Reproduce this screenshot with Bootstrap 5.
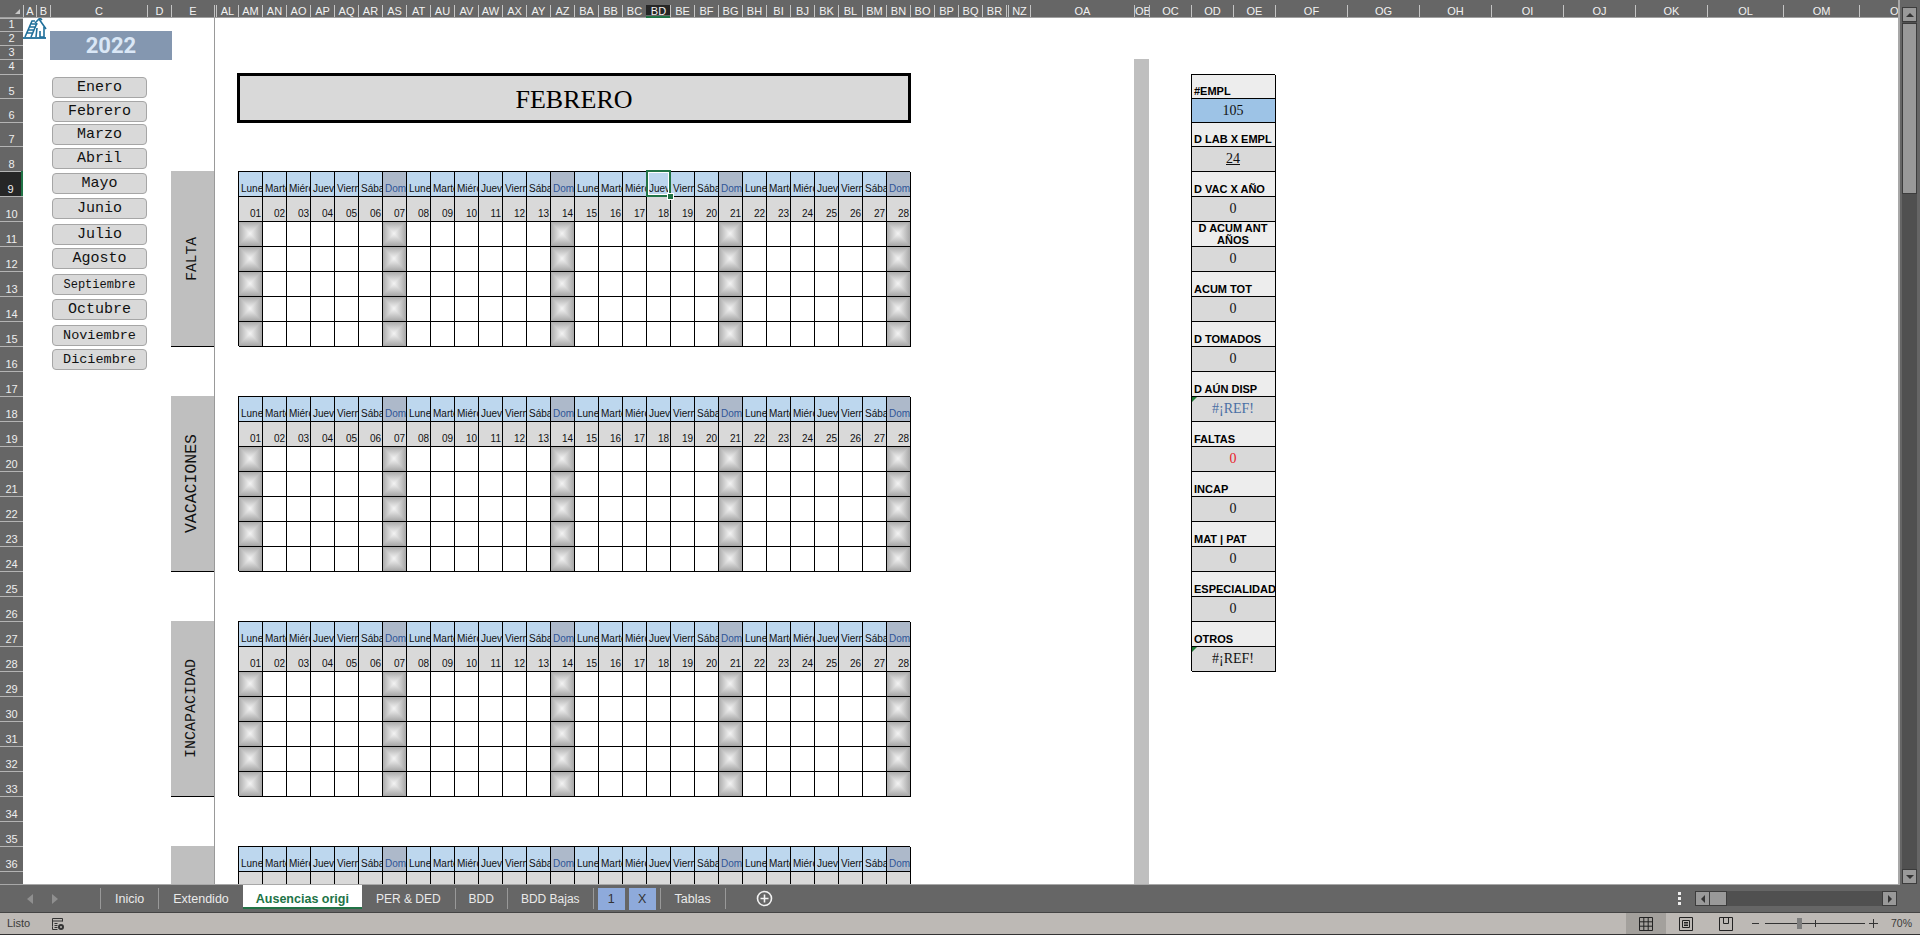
<!DOCTYPE html>
<html lang="es">
  <head>
    <meta charset="UTF-8" />
    <meta name="viewport" content="width=device-width, initial-scale=1.0" />
    <title>Ausencias</title>
    <link
      rel="stylesheet"
      href="https://cdn.jsdelivr.net/npm/bootstrap@5.3.0/dist/css/bootstrap.min.css"
    />
    <script src="https://cdn.jsdelivr.net/npm/bootstrap@5.3.0/dist/js/bootstrap.bundle.min.js"></script>
    <style>
      html, body { height: 100%; overflow: hidden; }
      body {
        background-color: #666;
        font-family: "Liberation Sans", Arial, sans-serif;
        font-size: 11px;
      }
      .hoja-zona { height: 885px; }
      .hoja {
        width: 1900px;
        height: 885px;
        background: #fff;
        overflow: hidden;
        border-right: 2px solid #a8a8a8;
        border-bottom: 1px solid #a8a8a8;
        align-content: start;
      }
      .esquina { background: #666; border-bottom: 1px solid #a0a0a0; }
      .esquina svg { margin: 9px 0 0 15px; display: block; }
      .col-cab {
        background: #666;
        color: #f2f2f2;
        font-size: 11px;
        padding-top: 5px;
        border-bottom: 1px solid #a0a0a0;
        overflow: hidden;
      }
      .col-cab > div {
        height: 12px;
        line-height: 13px;
        border-left: 1px solid #c4c4c4;
        text-align: center;
        white-space: nowrap;
      }
      .col-cab.activa > div { background: #262626; border-left-color: #262626; height: 10px; line-height: 12px; overflow: hidden; }
      .col-cab.activa { border-bottom-color: #217346; border-bottom-width: 2px; }
      .col-cab.ultima > div { text-align: left; padding-left: 30px; }
      .fila-cab {
        background: #666;
        color: #eee;
        font-size: 11px;
        line-height: 12px;
        padding-bottom: 1px;
        box-shadow: inset 0 1px 0 #b4b4b4;
      }
      .fila-cab.activa { background: #262626; border-right: 2px solid #217346; }
      .anio {
        background: #8497b0;
        color: #dae7f6;
        font-family: Roboto, "Liberation Sans", sans-serif;
        font-size: 22px;
        font-weight: 700;
        margin: 0 -1px -1px 0;
      }
      .mes-btn {
        --bs-btn-padding-y: 0;
        --bs-btn-padding-x: 0;
        --bs-btn-bg: #d9d9d9;
        --bs-btn-hover-bg: #d9d9d9;
        --bs-btn-border-color: #a6a6a6;
        --bs-btn-border-radius: 4px;
        --bs-btn-border-width: 1.5px;
        --bs-btn-font-family: "Liberation Mono", "DejaVu Sans Mono", monospace;
        --bs-btn-font-size: 15px;
        --bs-btn-line-height: 18px;
        --bs-btn-color: #111;
        width: 95px;
        height: 21px;
        margin-left: 2px;
        padding-top: 1px;
      }
      .mes-btn.chico { --bs-btn-font-size: 12px; }
      .mes-btn.medio { --bs-btn-font-size: 13.5px; }
      .bloque-lado {
        background: #bfbfbf;
        border-bottom: 1px solid #000;
        height: calc(100% + 1px);
        color: #111;
      }
      .bloque-lado span {
        writing-mode: vertical-rl;
        transform: rotate(180deg);
        font-family: "Liberation Mono", monospace;
        white-space: nowrap;
      }
      .linea-hoja { border-left: 1px solid #999; }
      .barra-gris { background: #bfbfbf; }
      .titulo-mes {
        background: #d9d9d9;
        border: 3px solid #000;
        margin: -1px;
        padding-top: 2px;
        font-family: "Liberation Serif", "Times New Roman", serif;
        font-size: 26px;
        color: #000;
      }
      .dia, .num, .vacia, .finde, .panel-et, .panel-val {
        box-shadow: inset 1px 1px 0 #000, 1px 1px 0 #000;
      }
      .dia {
        background: #bdd7ee;
        color: #111;
        font-size: 10px;
        line-height: 12px;
        padding: 0 0 1px 3px;
        overflow: hidden;
        white-space: nowrap;
        position: relative;
      }
      .dia.dom { background: #adb9ca; color: #2f5597; }
      .dia.sel { overflow: visible; z-index: 3; }
      .dia.sel b { font-weight: 400; display: block; width: 21px; overflow: hidden; }
      .sel-marco {
        position: absolute;
        inset: -1px -1px -1px 0;
        border: 2px solid #217346;
        box-shadow: inset 0 0 0 1px #fff;
      }
      .sel-punto {
        position: absolute;
        right: -3px;
        bottom: -3px;
        width: 5px;
        height: 5px;
        background: #217346;
        outline: 1px solid #fff;
      }
      .num {
        background: #d9d9d9;
        color: #111;
        font-size: 10px;
        line-height: 12px;
        padding: 0 1px 1px 0;
      }
      .vacia { background: #fff; }
      .finde {
        background:
          linear-gradient(90deg, #a6a6a6, #f4f4f4 50%, #a6a6a6),
          linear-gradient(#a6a6a6, #f4f4f4 50%, #a6a6a6);
        background-blend-mode: darken;
      }
      .panel-et {
        background: #ededed;
        color: #000;
        font-size: 11px;
        font-weight: 700;
        line-height: 12px;
        padding: 0 0 1px 3px;
        overflow: hidden;
        white-space: nowrap;
      }
      .panel-et.doble { white-space: normal; padding: 1px 0 0; }
      .panel-val {
        background: #d9d9d9;
        color: #111;
        font-family: "Liberation Serif", "Times New Roman", serif;
        font-size: 14px;
        position: relative;
      }
      .panel-val.azul { background: #9dc3e6; }
      .panel-val.subr { text-decoration: underline; }
      .panel-val.ref-azul { color: #4a6fa5; }
      .panel-val.rojo { color: #e8202a; }
      .panel-val.nota::before {
        content: "";
        position: absolute;
        top: 1px;
        left: 1px;
        border-top: 5px solid #1e7b34;
        border-right: 5px solid transparent;
      }
      .scroll-v { width: 20px; padding: 7px 3px 1px 2px; }
      .scroll-pista { background: #505050; }
      .scroll-boton, .scroll-guia {
        background: #999;
        border: 1px solid #3c3c3c;
      }
      .scroll-v .scroll-boton { height: 15px; }
      .scroll-v .scroll-guia { height: 171px; margin-top: 1px; }
      .flecha { width: 0; height: 0; border: 4px solid transparent; }
      .flecha.arriba { border-top: 0; border-bottom-color: #333; }
      .flecha.abajo { border-bottom: 0; border-top-color: #333; }
      .flecha.izq { border-left: 0; border-right-color: #333; }
      .flecha.der { border-right: 0; border-left-color: #333; }
      .tabs-barra { height: 27px; }
      .tabs-nav { width: 100px; padding-left: 27px; gap: 19px; }
      .tabs-nav .flecha.izq { border-right-color: #8f8f8f; border-width: 5px 6px 5px 0; border-left: 0; }
      .tabs-nav .flecha.der { border-left-color: #8f8f8f; border-width: 5px 0 5px 6px; border-right: 0; }
      .tabs-lista { height: 27px; }
      .pestania {
        --bs-nav-link-color: #eaeaea;
        --bs-nav-link-hover-color: #eaeaea;
        --bs-nav-link-padding-x: 14px;
        --bs-nav-link-padding-y: 0;
        --bs-nav-link-font-size: 12.5px;
        height: 21px;
        margin-top: 3px;
        line-height: 23px;
        border-left: 1px solid #999;
        white-space: nowrap;
      }
      .pestania.mayus { --bs-nav-link-font-size: 12px; }
      .pestania.justa { --bs-nav-link-padding-x: 13px; }
      .pestania.activa {
        --bs-nav-link-padding-x: 13px;
        background: #fff;
        color: #217346;
        font-weight: 700;
        height: 24px;
        margin-top: 0;
        line-height: 28px;
        border: 0;
        border-bottom: 2px solid #217346;
      }
      .pestania.sin-linea { border-left: 0; }
      .pestania.caja {
        background: #8eaadb;
        color: #333;
        border: 0;
        height: 22px;
        padding: 0;
        width: 27px;
        text-align: center;
        margin-right: 4px;
        line-height: 23px;
      }
      .fin-linea { width: 1px; height: 21px; margin-top: 3px; background: #999; }
      .tab-mas { margin: 5px 0 0 30px; }
      .puntos { gap: 2px; margin-right: 14px; }
      .puntos i { width: 3px; height: 3px; background: #eee; display: block; }
      .scroll-h { width: 202px; height: 15px; margin-right: 23px; }
      .scroll-h .scroll-boton { width: 15px; }
      .scroll-h .scroll-guia { width: 17px; border-left: 0; }
      .estado {
        height: 23px;
        background: #bdb9b5;
        border-top: 1px solid #444;
        border-bottom: 1px solid #333;
        color: #3a3a3a;
        font-size: 11px;
      }
      .listo { margin-left: 7px; }
      .macro { margin-left: 21px; }
      .estado-vista { width: 40px; height: 21px; }
      .estado-vista.activa { background: #a3a09c; }
      .zoom-menos { margin-left: 6px; }
      .zoom-linea { width: 100px; height: 1px; background: #333; position: relative; margin: 0 4px 0 6px; }
      .zoom-linea::before { content: ""; position: absolute; left: 50px; top: -3px; width: 1px; height: 7px; background: #333; }
      .zoom-guia { position: absolute; left: 32px; top: -5px; width: 5px; height: 11px; background: #7d7d7d; }
      .zoom-texto { width: 42px; padding-right: 8px; text-align: right; font-size: 10.5px; }
    </style>
  </head>
  <body class="d-flex flex-column">
    <div class="hoja-zona d-flex">
      <div class="hoja d-grid" id="hoja"></div>
      <div class="scroll-v">
        <div class="scroll-pista h-100 d-flex flex-column">
          <div class="scroll-boton d-flex align-items-center justify-content-center"><div class="flecha arriba"></div></div>
          <div class="scroll-guia"></div>
          <div class="flex-grow-1"></div>
          <div class="scroll-boton d-flex align-items-center justify-content-center"><div class="flecha abajo"></div></div>
        </div>
      </div>
    </div>

    <div class="tabs-barra d-flex">
      <div class="tabs-nav d-flex align-items-center">
        <div class="flecha izq"></div>
        <div class="flecha der"></div>
      </div>
      <div class="tabs-lista nav flex-nowrap">
        <a class="nav-link pestania" href="#">Inicio</a>
        <a class="nav-link pestania" href="#">Extendido</a>
        <a class="nav-link pestania activa" href="#">Ausencias origi</a>
        <a class="nav-link pestania mayus sin-linea" href="#">PER &amp; DED</a>
        <a class="nav-link pestania mayus justa" href="#">BDD</a>
        <a class="nav-link pestania mayus justa" href="#">BDD Bajas</a>
        <div class="fin-linea me-1"></div>
        <a class="nav-link pestania caja" href="#">1</a>
        <a class="nav-link pestania caja" href="#">X</a>
        <a class="nav-link pestania" href="#">Tablas</a>
        <div class="fin-linea"></div>
        <svg class="tab-mas" width="17" height="17" viewBox="0 0 17 17" fill="none" stroke="#f2f2f2" stroke-width="1.6">
          <circle cx="8.5" cy="8.5" r="7" />
          <path d="M8.5 4.5v8M4.5 8.5h8" />
        </svg>
      </div>
      <div class="ms-auto d-flex align-items-center">
        <div class="puntos d-flex flex-column"><i></i><i></i><i></i></div>
        <div class="scroll-h scroll-pista d-flex">
          <div class="scroll-boton d-flex align-items-center justify-content-center"><div class="flecha izq"></div></div>
          <div class="scroll-guia"></div>
          <div class="flex-grow-1"></div>
          <div class="scroll-boton d-flex align-items-center justify-content-center"><div class="flecha der"></div></div>
        </div>
      </div>
    </div>

    <div class="estado d-flex align-items-center">
      <span class="listo">Listo</span>
      <svg class="macro" width="14" height="14" viewBox="0 0 14 14" fill="none" stroke="#333">
        <path d="M1.5 9.500v-8h10v3M1.5 4h10M3.500 6.500h3M3.500 8.500h3M3.500 10.500h3" />
        <path d="M1.500 9.500v3h5" />
        <circle cx="10" cy="10" r="3" fill="#333" stroke="none" />
        <circle cx="10" cy="10" r="1" fill="#bdb9b5" stroke="none" />
      </svg>
      <div class="estado-vista activa ms-auto d-flex align-items-center justify-content-center">
        <svg width="14" height="14" viewBox="0 0 14 14" fill="none" stroke="#222">
          <path d="M.5.5h13v13H.5zM.5 4.800h13M.5 9.200h13M4.800.5v13M9.200.5v13" />
        </svg>
      </div>
      <div class="estado-vista d-flex align-items-center justify-content-center">
        <svg width="14" height="14" viewBox="0 0 14 14" fill="none" stroke="#222">
          <path d="M.5.5h13v13H.5zM3.500 3.500h7v7h-7zM5 5.500h4M5 7h4M5 8.500h4" />
        </svg>
      </div>
      <div class="estado-vista d-flex align-items-center justify-content-center">
        <svg width="14" height="14" viewBox="0 0 14 14" fill="none" stroke="#222">
          <path d="M.5.5h13v13H.5zM4.500.5v6h5V.5" />
        </svg>
      </div>
      <svg class="zoom-menos" width="7" height="3" viewBox="0 0 7 3"><path d="M0 1.500h7" stroke="#333" /></svg>
      <div class="zoom-linea"><div class="zoom-guia"></div></div>
      <svg width="9" height="9" viewBox="0 0 9 9"><path d="M0 4.500h9M4.500 0v9" stroke="#333" /></svg>
      <div class="zoom-texto">70%</div>
    </div>

    <script>
      // columnas de la hoja: [nombre, ancho]
      let columnas = [["", 23], ["A", 13], ["B", 14], ["C", 97], ["D", 24], ["E", 43], ["oculta1", 2], ["AL", 22]];
      let letras = "AM AN AO AP AQ AR AS AT AU AV AW AX AY AZ BA BB BC BD BE BF BG BH BI BJ BK BL BM BN BO BP BQ BR".split(" ");
      letras.forEach((l) => columnas.push([l, 24]));
      columnas.push(["oculta2", 2], ["NZ", 22], ["OA", 104], ["OB", 15], ["OC", 42], ["OD", 42], ["OE", 42]);
      ["OF", "OG", "OH", "OI", "OJ", "OK"].forEach((l) => columnas.push([l, 72]));
      columnas.push(["OL", 76], ["OM", 76], ["ON", 39]);

      // alto de cada fila, la fila 37 queda cortada por la barra de hojas
      let altos = [13, 14, 14, 15, 24, 24, 24, 25];
      while (altos.length < 37) altos.push(25);

      let meses = [
        ["Enero", 3], ["Febrero", 3], ["Marzo", 2], ["Abril", 2], ["Mayo", 2], ["Junio", 2],
        ["Julio", 3], ["Agosto", 2], ["Septiembre", 3, "chico"], ["Octubre", 3],
        ["Noviembre", 4, "medio"], ["Diciembre", 3, "medio"],
      ];

      let panel = [
        ["#EMPL", "105", "azul"],
        ["D LAB X EMPL", "24", "subr"],
        ["D VAC X AÑO", "0", ""],
        ["D ACUM ANT AÑOS", "0", ""],
        ["ACUM TOT", "0", ""],
        ["D TOMADOS", "0", ""],
        ["D AÚN DISP", "#¡REF!", "ref-azul nota"],
        ["FALTAS", "0", "rojo"],
        ["INCAP", "0", ""],
        ["MAT | PAT", "0", ""],
        ["ESPECIALIDAD", "0", ""],
        ["OTROS", "#¡REF!", "nota"],
      ];

      let semana = ["Lunes", "Martes", "Miércoles", "Jueves", "Viernes", "Sábado", "Domingo"];
      let hoja = document.getElementById("hoja");
      let indice = {};
      columnas.forEach((c, i) => (indice[c[0]] = i + 1));
      let html = "";

      function celda(clase, fila, col, contenido, filaFin, colFin, extra) {
        let f = fila + 1;
        let c = indice[col];
        let f2 = (filaFin || fila) + 2;
        let c2 = indice[colFin || col] + 1;
        html += `<div class="${clase}" style="grid-area:${f}/${c}/${f2}/${c2};${extra || ""}">${contenido || ""}</div>`;
      }

      function calendario(filaIni, filas) {
        for (let f = 0; f < filas; f++) {
          for (let i = 0; i < 28; i++) {
            let col = letras[i];
            let finde = (i + 1) % 7 === 0;
            if (f === 0) {
              let nombre = semana[i % 7];
              let sel = filaIni === 9 && i === 17;
              let texto = sel
                ? `<b>${nombre}</b><div class="sel-marco"></div><div class="sel-punto"></div>`
                : nombre;
              celda(`dia d-flex align-items-end${finde ? " dom" : ""}${sel ? " sel" : ""}`, filaIni, col, texto);
            } else if (f === 1) {
              // el ultimo calendario esta cortado antes de llegar a los numeros
              let numero = filas > 2 ? String(i + 1).padStart(2, "0") : "";
              celda("num d-flex align-items-end justify-content-end", filaIni + 1, col, numero);
            } else {
              celda(finde || i === 0 ? "finde" : "vacia", filaIni + f, col);
            }
          }
        }
      }

      // cabeceras
      html += `<div class="esquina" style="grid-area:1/1/2/2"><svg width="5" height="5" viewBox="0 0 5 5"><path d="M5 0v5H0z" fill="#c8c8c8"/></svg></div>`;
      columnas.slice(1).forEach((c, i) => {
        let nombre = c[0].startsWith("oculta") ? "" : c[0];
        let clase = "col-cab" + (c[0] === "BD" ? " activa" : "") + (c[0] === "ON" ? " ultima" : "");
        html += `<div class="${clase}" style="grid-area:1/${i + 2}/2/${i + 3}"><div>${c[0] === "ON" ? "O" : nombre}</div></div>`;
      });
      altos.forEach((a, i) => {
        let n = i + 1;
        html += `<div class="fila-cab d-flex align-items-${n < 5 ? "center" : "end"} justify-content-center${n === 9 ? " activa" : ""}" style="grid-area:${n + 1}/1/${n + 2}/2">${n < 37 ? n : ""}</div>`;
      });

      // columna izquierda
      html += `<div class="align-self-start" style="grid-area:2/2/4/4">
        <svg class="d-block" width="24" height="21" viewBox="0 0 24 21" fill="none" stroke="#1f6f9a" stroke-width="1.6">
          <path d="M0 20h23" stroke-width="1.8" />
          <path d="M2 19L9 3h3M8 19l6-14M4 15h6M5.500 12h6M7 9h6M8.500 6h6" />
          <path d="M12 5L16 1l7 10M14 3l3-3 2 2" />
          <path d="M14 10l-1 9M21 9v10h-4v-6" />
        </svg>
      </div>`;
      celda("anio d-flex align-items-center justify-content-center", 2, "C", "2022", 3, "D");
      meses.forEach((m, i) => {
        celda("align-self-start", i + 5, "C",
          `<button type="button" class="btn mes-btn d-block ${m[2] || ""}">${m[0]}</button>`,
          null, null, `margin-top:${m[1]}px`);
      });

      // bloques laterales rotulados
      [[9, 15, "FALTA", 14.6], [18, 24, "VACACIONES", 16.5], [27, 33, "INCAPACIDAD", 15]].forEach((b) => {
        celda("bloque-lado d-flex align-items-center justify-content-center", b[0], "E",
          `<span style="font-size:${b[3]}px">${b[2]}</span>`, b[1]);
      });
      celda("bloque-lado", 36, "E", "", 37);
      celda("linea-hoja", 1, "oculta1", "", 37);
      celda("barra-gris", 4, "OB", "", 37);

      // titulo y calendarios
      celda("titulo-mes d-flex align-items-center justify-content-center", 5, "AM", "FEBRERO", 6, "BN");
      calendario(9, 7);
      calendario(18, 7);
      calendario(27, 7);
      calendario(36, 2);

      // panel de totales
      panel.forEach((p, i) => {
        let f = 5 + i * 2;
        let doble = p[0] === "D ACUM ANT AÑOS";
        celda(`panel-et d-flex ${doble ? "doble align-items-center text-center" : "align-items-end"}`, f, "OD", doble ? `<span class="w-100">${p[0]}</span>` : p[0], null, "OE");
        celda(`panel-val d-flex align-items-center justify-content-center ${p[2]}`, f + 1, "OD", p[1], null, "OE");
      });

      hoja.style.gridTemplateColumns = columnas.map((c) => c[1] + "px").join(" ");
      hoja.style.gridTemplateRows = "18px " + altos.map((a) => a + "px").join(" ");
      hoja.innerHTML = html;
    </script>
  </body>
</html>
